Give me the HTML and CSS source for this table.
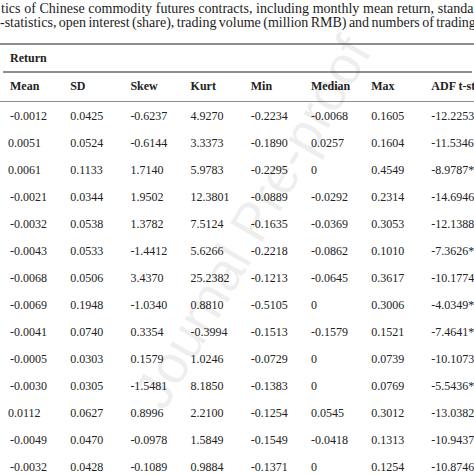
FILE: index.html
```html
<!DOCTYPE html>
<html>
<head>
<meta charset="utf-8">
<link rel="stylesheet" href="styles.css">
</head>
<body>
<div class="page">
  <div class="caption">
    <div class="line l1">tics of Chinese commodity futures contracts, including monthly mean return, standard deviation,</div>
    <div class="line l2">-statistics, open interest (share), trading volume (million RMB) and numbers of trading days.</div>
  </div>
  <div class="rule rule-top"></div>
  <div class="group-row">Return</div>
  <div class="rule rule-group"></div>
  <div class="row head">
    <span>Mean</span><span>SD</span><span>Skew</span><span>Kurt</span><span>Min</span><span>Median</span><span>Max</span><span>ADF t-statistic</span>
  </div>
  <div class="rule rule-head"></div>
  <div class="body" id="tbody">
    <div class="row"><span>-0.0012</span><span>0.0425</span><span>-0.6237</span><span>4.9270</span><span>-0.2234</span><span>-0.0068</span><span>0.1605</span><span>-12.2253***</span></div>
    <div class="row"><span class="pos">0.0051</span><span>0.0524</span><span>-0.6144</span><span>3.3373</span><span>-0.1890</span><span>0.0257</span><span>0.1604</span><span>-11.5346***</span></div>
    <div class="row"><span class="pos">0.0061</span><span>0.1133</span><span>1.7140</span><span>5.9783</span><span>-0.2295</span><span>0</span><span>0.4549</span><span>-8.9787***</span></div>
    <div class="row"><span>-0.0021</span><span>0.0344</span><span>1.9502</span><span>12.3801</span><span>-0.0889</span><span>-0.0292</span><span>0.2314</span><span>-14.6946***</span></div>
    <div class="row"><span>-0.0032</span><span>0.0538</span><span>1.3782</span><span>7.5124</span><span>-0.1635</span><span>-0.0369</span><span>0.3053</span><span>-12.1388***</span></div>
    <div class="row"><span>-0.0043</span><span>0.0533</span><span>-1.4412</span><span>5.6266</span><span>-0.2218</span><span>-0.0862</span><span>0.1010</span><span>-7.3626***</span></div>
    <div class="row"><span>-0.0068</span><span>0.0506</span><span>3.4370</span><span>25.2382</span><span>-0.1213</span><span>-0.0645</span><span>0.3617</span><span>-10.1774***</span></div>
    <div class="row"><span>-0.0069</span><span>0.1948</span><span>-1.0340</span><span>0.8810</span><span>-0.5105</span><span>0</span><span>0.3006</span><span>-4.0349***</span></div>
    <div class="row"><span>-0.0041</span><span>0.0740</span><span>0.3354</span><span>-0.3994</span><span>-0.1513</span><span>-0.1579</span><span>0.1521</span><span>-7.4641***</span></div>
    <div class="row"><span>-0.0005</span><span>0.0303</span><span>0.1579</span><span>1.0246</span><span>-0.0729</span><span>0</span><span>0.0739</span><span>-10.1073***</span></div>
    <div class="row"><span>-0.0030</span><span>0.0305</span><span>-1.5481</span><span>8.1850</span><span>-0.1383</span><span>0</span><span>0.0769</span><span>-5.5436***</span></div>
    <div class="row"><span class="pos">0.0112</span><span>0.0627</span><span>0.8996</span><span>2.2100</span><span>-0.1254</span><span>0.0545</span><span>0.3012</span><span>-13.0382***</span></div>
    <div class="row"><span>-0.0049</span><span>0.0470</span><span>-0.0978</span><span>1.5849</span><span>-0.1549</span><span>-0.0418</span><span>0.1313</span><span>-10.9437***</span></div>
    <div class="row"><span>-0.0032</span><span>0.0428</span><span>-0.1089</span><span>0.9884</span><span>-0.1371</span><span>0</span><span>0.1254</span><span>-10.8746***</span></div>
  </div>
  <div class="watermark">Journal Pre-proof</div>
</div>
</body>
</html>
```
FILE: styles.css
```css
html, body {
  margin: 0;
  padding: 0;
  background: #ffffff;
}
body {
  width: 474px;
  height: 474px;
  overflow: hidden;
}
.page {
  position: relative;
  width: 474px;
  height: 474px;
  overflow: hidden;
  font-family: "Liberation Serif", "Times New Roman", serif;
  color: #222;
}
.caption {
  padding-top: 2px;
  height: 41px;
  box-sizing: border-box;
  font-size: 14px;
  line-height: 13.5px;
  color: #1c1c1c;
  white-space: nowrap;
}
.line.l1 {
  padding-left: 1px;
  word-spacing: 0.2px;
}
.line.l2 {
  word-spacing: -1.1px;
}
.rule {
  background: #8e8e8e;
}
.rule-top {
  height: 2px;
  margin-top: 2px;
  width: 474px;
}
.group-row {
  height: 26px;
  line-height: 26px;
  padding-left: 10px;
  font-weight: bold;
  font-size: 12px;
}
.rule-group {
  height: 1.5px;
  margin-left: 3px;
  width: 469px;
}
.row {
  display: grid;
  grid-template-columns: repeat(8, 60.2px);
  padding-left: 10px;
  height: 27px;
  align-items: center;
  font-size: 12px;
  white-space: nowrap;
}
.row.head {
  height: 28px;
  font-weight: bold;
}
.rule-head {
  height: 1.5px;
  width: 474px;
}
.body .row:first-child {
  margin-top: 1px;
}
.pos {
  margin-left: -2px;
}
.watermark {
  position: absolute;
  left: 252px;
  top: 222px;
  transform: translate(-50%, -50%) rotate(-60deg);
  font-family: "Liberation Sans", Arial, sans-serif;
  font-size: 54px;
  color: rgba(0, 0, 0, 0.065);
  white-space: nowrap;
  pointer-events: none;
}
```
